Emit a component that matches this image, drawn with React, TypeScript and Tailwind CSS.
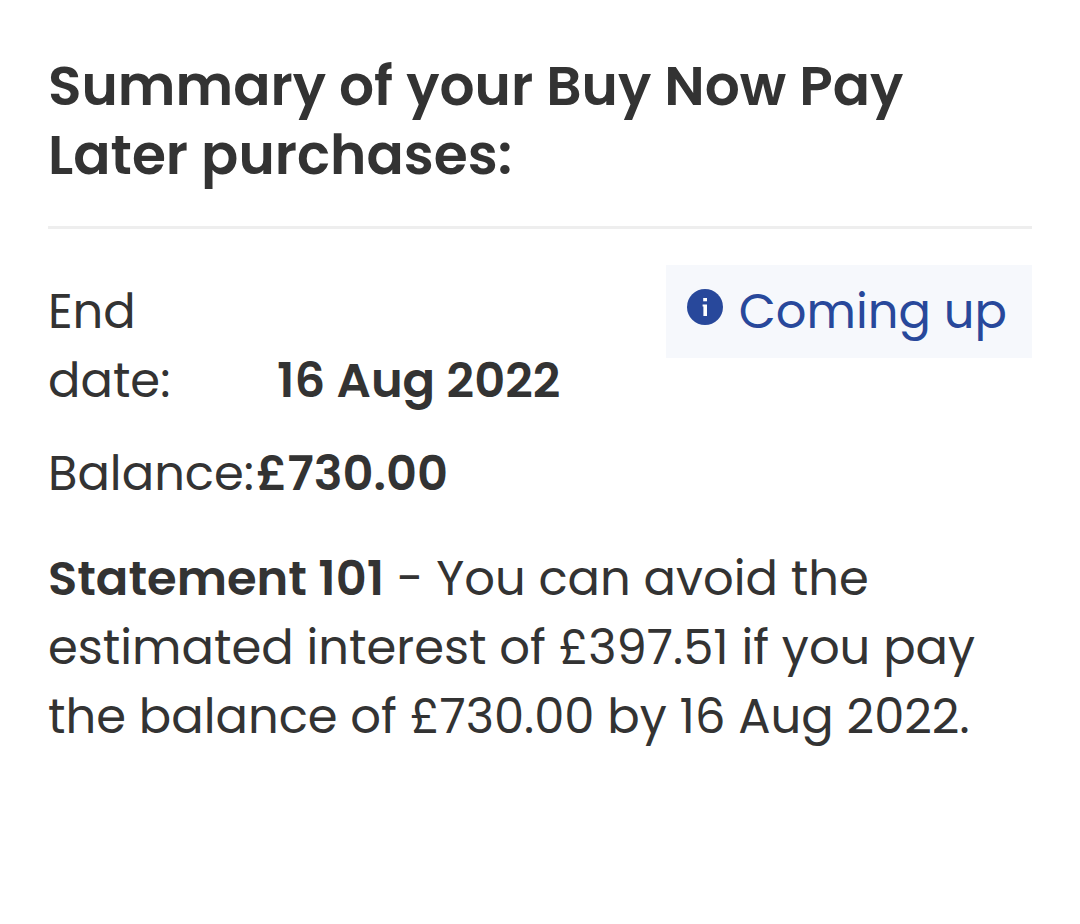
import React from 'react';

interface Purchase {
  id: number;
  endDate: string;
  balance: string;
  interest: string;
}

const purchases: Purchase[] = [
  { id: 101, endDate: '16 Aug 2022', balance: '£730.00', interest: '£397.51' },
];

const InfoIcon: React.FC = () => (
  <svg viewBox="0 0 36 36" className="mt-3 h-9 w-9 shrink-0" aria-hidden="true">
    <circle cx="18" cy="18" r="18" fill="#28489b" />
    <rect x="16.2" y="9" width="3.8" height="3.3" fill="#fff" />
    <path d="M15.6 15.4H20V27H16.4V17.4H15.6Z" fill="#fff" />
  </svg>
);

const PurchaseSummary: React.FC<{ purchase: Purchase }> = ({ purchase }) => {
  const { id, endDate, balance, interest } = purchase;

  return (
    <section>
      <div className="flex items-start justify-between">
        <dl className="pt-3">
          <div className="flex items-end">
            <dt className="w-[229px] pr-20">End date:</dt>
            <dd className="font-semibold">{endDate}</dd>
          </div>
          <div className="mt-6 flex">
            <dt className="w-[208px]">Balance:</dt>
            <dd className="font-semibold">{balance}</dd>
          </div>
        </dl>

        <div className="flex gap-4 bg-[#f6f8fc] py-3 pr-[25px] pl-[21px] text-[#28489b]">
          <InfoIcon />
          <span className="whitespace-nowrap">Coming up</span>
        </div>
      </div>

      <p className="mt-9">
        <strong className="font-semibold">{`Statement ${id}`}</strong>
        {` - You can avoid the estimated interest of ${interest} if you pay the balance of ${balance} by ${endDate}.`}
      </p>
    </section>
  );
};

export default function App() {
  return (
    <main className="bg-white px-12 pt-[51px] pb-12 font-['Poppins','Inter',sans-serif] text-[48px] leading-[69px] text-[#333333]">
      <h1 className="border-b-3 border-[#eeeeee] pb-[37px] text-[55px] font-semibold">
        Summary of your Buy Now Pay Later purchases:
      </h1>

      <div className="pt-9">
        {purchases.map((purchase) => (
          <PurchaseSummary key={purchase.id} purchase={purchase} />
        ))}
      </div>
    </main>
  );
}
